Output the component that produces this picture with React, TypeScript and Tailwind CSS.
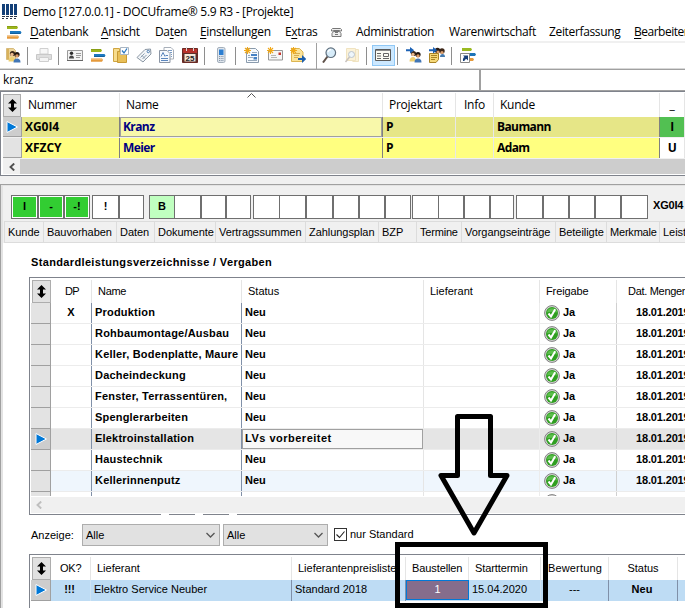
import React from "react";
import clsx from "clsx";

const segoe = "font-['Open_Sans',sans-serif]";
const arial = "font-['Liberation_Sans',Arial,sans-serif]";

type SvgProps = { children: React.ReactNode; className?: string; box?: string };

function Svg({ children, className = "size-4", box = "0 0 16 16" }: SvgProps) {
  return (
    <svg viewBox={box} className={clsx("block shrink-0", className)} fill="none" aria-hidden="true">
      {children}
    </svg>
  );
}

function BarsIcon() {
  return (
    <Svg>
      <path d="M1 2h10l1 1.500L11 5H1z" fill="#9db61c" />
      <path d="M4 7h10.500l1 1.500-1 1.500H4z" fill="#1c78c0" />
      <path d="M1 11.500h11l1 1.500-1 1.700H1z" fill="#e59a3c" />
      <path d="M1 2.500h10" stroke="#7f9412" strokeWidth=".7" />
      <path d="M4 9.500h10.500" stroke="#115a94" strokeWidth=".8" />
      <path d="M1 12.200h11" stroke="#f6c78c" strokeWidth=".9" />
    </Svg>
  );
}

function Star() {
  return (
    <path
      d="M3.500 0v7M0 3.500h7M1 1l5 5M6 1L1 6"
      stroke="#f0a818"
      strokeWidth="1.100"
    />
  );
}

function People() {
  return (
    <>
      <circle cx="7.500" cy="6.500" r="2.600" fill="#3b2718" />
      <circle cx="12" cy="7.500" r="2.600" fill="#21160f" />
      <circle cx="7" cy="7.500" r="1.700" fill="#e9b98d" />
      <circle cx="12" cy="9" r="1.700" fill="#d99a68" />
      <path d="M3.500 14.500c0-3 1.500-4.500 3.500-4.500s3 1.500 3 4.500z" fill="#eed070" />
      <path d="M8.500 15.500c0-3 1.500-4 3.500-4s3.500 1 3.500 4z" fill="#4276b5" />
    </>
  );
}

function UsersIcon() {
  return (
    <Svg>
      <path d="M1.500 1.500h7l2 2v9h-9z" fill="#ecd49a" stroke="#cfae66" strokeWidth=".8" />
      <path d="M2 2h2v10H2z" fill="#d9b25c" />
      <People />
    </Svg>
  );
}

function PrinterIcon() {
  return (
    <Svg>
      <path d="M4 1.500h8V7H4z" fill="#f7f7f7" stroke="#d0d0d0" />
      <path d="M.5 7.500h15v5H.5z" fill="#dedede" stroke="#c8c8c8" />
      <path d="M3.500 10.500h9v4h-9z" fill="#f4f4f4" stroke="#cfcfcf" />
    </Svg>
  );
}

function CardIcon() {
  return (
    <Svg>
      <path d="M.5 3.500h15v10H.5z" fill="#f3f3f3" stroke="#9a9a9a" />
      <path d="M0 13.500h16" stroke="#666" />
      <circle cx="4.500" cy="6.300" r="1.700" fill="#2b2b2b" />
      <path d="M2 11.500c0-2 1-3 2.500-3s2.500 1 2.500 3z" fill="#444" />
      <path d="M9 6.500h5M9 8.500h5M9 10.500h4" stroke="#999" />
    </Svg>
  );
}

function FolderCheckIcon() {
  return (
    <Svg>
      <path d="M.5 1.500h6v13h-6z" fill="#f7dc8c" stroke="#cfa441" />
      <path d="M4.500 4.500h9v11h-9z" fill="#e9bf57" stroke="#c79a35" />
      <path d="M7.500.5h8v7h-8z" fill="#fff" stroke="#a9b6c4" />
      <path d="M9 3.500l2 2.500L14 1.500" stroke="#2a77c0" strokeWidth="1.300" />
    </Svg>
  );
}

function TagIcon() {
  return (
    <Svg>
      <path d="M1 10.500L9 2.500l5.500-.5.5 5-8 8z" fill="#f2f5f8" stroke="#8b97a4" />
      <path d="M4.500 10.500l4-4M6.500 12l4-4M6 8.500l3 3" stroke="#8fa0b2" />
      <circle cx="12.300" cy="4.500" r="1.200" stroke="#4f7eb3" />
    </Svg>
  );
}

function NewspaperIcon() {
  return (
    <Svg>
      <path d="M5 .5h7l2.500 2.500v9H5z" fill="#fff" stroke="#a9b0ba" />
      <path d="M.5 3.500H8l3 3v9H.5z" fill="#f4f8fd" stroke="#8b95a4" />
      <path d="M2 9.500l2-4 2 4M2 11.500h7M6.500 8.500H9M2 13.500h7" stroke="#5b86bd" />
      <path d="M9 3.500h4M11 5.500h2M12 7.500h1M12 9.500h1" stroke="#7a9cc6" />
    </Svg>
  );
}

function CalendarIcon() {
  return (
    <Svg>
      <path d="M.5 1.500h15v14H.5z" fill="#5e2f2a" stroke="#6b2a24" />
      <path d="M1 2h14v4H1z" fill="#b7322b" />
      <path d="M4.500 0v4M11.500 0v4" stroke="#ddd" />
      <path d="M2.500 7h11v7.500h-11z" fill="#f5e9da" />
      <text x="3.600" y="13.700" fontSize="8" fontWeight="bold" fill="#222" fontFamily="Liberation Sans">
        25
      </text>
    </Svg>
  );
}

function PhoneIcon() {
  return (
    <Svg>
      <rect x="4.500" y=".5" width="7.500" height="15" rx="1.500" fill="#dfe5ec" stroke="#a3afbb" />
      <path d="M6 2.500h4.500V8H6z" fill="#2c7ed1" />
      <path d="M6 9.500h4.500M6 11.500h4.500M6 13.500h4.500" stroke="#8595a8" strokeDasharray="1 .7" />
    </Svg>
  );
}

function NewDocIcon() {
  return (
    <Svg>
      <path d="M2.500 1.500h9l3 3v11h-12z" fill="#f6fafe" stroke="#8a9bad" />
      <path d="M8 5.500h5M4 8.500h2M4 10.500h5M4 13.500h9" stroke="#98aabd" />
      <path d="M7 7h6v2H7zM9.500 10h3.500v2.500H9.500z" fill="#4682c4" />
      <Star />
    </Svg>
  );
}

function NewMailIcon() {
  return (
    <Svg>
      <path d="M1.500 3.500h14v9.500h-14z" fill="#f6f6f6" stroke="#979797" />
      <path d="M4 8.500h5M4 10.500h6" stroke="#b5b5b5" />
      <path d="M11.500 5.500h2.500V8h-2.500z" fill="#c7352d" />
      <Star />
    </Svg>
  );
}

function NewExportIcon() {
  return (
    <Svg>
      <path d="M1.500 1.500h8l3.500 3.500v9.500H1.500z" fill="#fbe39a" stroke="#dcb552" />
      <path d="M4 6.500h6M4 8.500h5M4 10.500h4" stroke="#d7ae50" />
      <path d="M8 11h4V8l4.200 4L12 16v-3H8z" fill="#1c5eab" />
      <Star />
    </Svg>
  );
}

function SearchIcon() {
  return (
    <Svg>
      <path d="M6.500 9.500L2 15.500" stroke="#5e5048" strokeWidth="2" />
      <circle cx="9.800" cy="5.700" r="4.800" fill="#d7ecf9" stroke="#5f6f7e" strokeWidth="1.200" />
      <path d="M7 5.200a3 3 0 013-2.500" stroke="#fff" strokeWidth="1.200" />
    </Svg>
  );
}

function SearchFolderIcon() {
  return (
    <Svg>
      <path d="M2.500 1.500h9v12h-9zM11.500 2.500h3v12h-6" fill="#fbf2d9" stroke="#f0e3c0" />
      <path d="M5.500 10l-4 5" stroke="#c9c3be" strokeWidth="1.500" />
      <circle cx="7.500" cy="7.500" r="3" fill="#eef6fb" stroke="#bcc5cd" />
    </Svg>
  );
}

function FormIcon() {
  return (
    <Svg>
      <path d="M.5 2.500h15v11H.5z" fill="#fbfbf4" stroke="#595959" />
      <path d="M1 3.500h14" stroke="#8c8c8c" />
      <path d="M2 6.500h4M2 9h4M2 11.500h4M8 11.500h6" stroke="#666" />
      <path d="M8.500 6.500h5v3h-5z" stroke="#666" />
    </Svg>
  );
}

function ArrowRight() {
  return <path d="M0 2.200h4V0l4.200 3.200L4 6.400V4.200H0z" fill="#1c62b5" />;
}

function AssignPeopleIcon() {
  return (
    <Svg>
      <People />
      <ArrowRight />
    </Svg>
  );
}

function AssignNoteIcon() {
  return (
    <Svg>
      <circle cx="8.500" cy="3.500" r="2.700" fill="#2b1b12" />
      <circle cx="13" cy="4" r="2.700" fill="#3d2617" />
      <circle cx="9" cy="5" r="1.600" fill="#dda170" />
      <circle cx="13" cy="5.500" r="1.600" fill="#dda170" />
      <path d="M11 10c0-2 1-3 2.500-3S16 8 16 10z" fill="#447aae" />
      <path d="M.5 6.500h9v6l-2.500 3H.5z" fill="#f5d878" stroke="#a98324" />
      <path d="M2 8.500h6M2 10.500h6M2 12.500h4" stroke="#a98324" />
      <ArrowRight />
    </Svg>
  );
}

function ShortcutIcon() {
  return (
    <Svg>
      <path d="M2 1h9l1 1.500L11 4H2z" fill="#9aba22" />
      <path d="M6 6h9l1 1.500L15 9H6z" fill="#1d74b8" />
      <path d="M9 11h4l1 1.500-1 1.500H9z" fill="#e59a3c" />
      <path d="M.5 6.500h9v9h-9z" fill="#fff" stroke="#888" />
      <path d="M3 14c-.3-2.200.3-3.300 1.500-4L3 8.500h5v5L6.500 12C5.300 12.300 4.500 13 4.500 14z" fill="#173f79" />
    </Svg>
  );
}

function AppLogo() {
  return (
    <Svg>
      <path d="M0 0h3v11H0zM4 0h3v11H4zM8 0h3v11H8zM12 0h3v11h-3z" fill="#123f78" />
      <path
        d="M0 12h3v1H0zM4 12h3v1H4zM8 12h3v1H8zM12 12h3v1h-3zM0 14h2v1H0zM4 14h2v1H4zM8 14h2v1H8zM12 14h2v1h-2z"
        fill="#28344a"
      />
    </Svg>
  );
}

function TelephoneIcon() {
  return (
    <Svg className="h-[9px] w-[11px]" box="0 0 11 9">
      <path d="M.5 3V1.500l1-1h8l1 1V3h-2v-.5h-6V3zM2.500 3.500h6l1.500 2v3H1v-3z" fill="#eee" stroke="#777" />
      <path d="M4 4.500h3M4 6.500h3" stroke="#777" />
    </Svg>
  );
}

function Check() {
  return (
    <Svg className="size-4">
      <circle cx="8" cy="8" r="7.400" fill="#d8d8d8" stroke="#808080" />
      <circle cx="8" cy="8" r="6" fill="#2f9f20" />
      <path d="M2.800 7.500a5.300 5.300 0 0110.400 0c-3-1-7.400-1-10.400 0z" fill="#5cbf4c" />
      <path d="M4.500 8.500L7 11.500l4.200-7.300" stroke="#fff" strokeWidth="2" />
    </Svg>
  );
}

function Sorter({ className = "w-[19px]" }: { className?: string }) {
  return (
    <div className={clsx("flex h-[23px] shrink-0 items-center justify-center border border-[#adadad] bg-[#e1e1e1]", className)}>
      <Svg className="h-[13px] w-[9px]" box="0 0 9 13">
        <path d="M4.500 0L9 4.500H6v4h3L4.500 13 0 8.500h3v-4H0z" fill="#000" />
      </Svg>
    </div>
  );
}

function Marker({ className, active }: { className: string; active?: boolean }) {
  return (
    <div
      className={clsx(
        "flex shrink-0 items-center justify-center border-r border-b border-[#a0a0a0]",
        active ? "bg-[#cdcdcd]" : "bg-[#e3e3e3]",
        className,
      )}
    >
      {active && (
        <Svg className="h-3 w-3" box="0 0 12 12">
          <path d="M1 .5v11L11.500 6z" fill="#0078d7" stroke="#fff" />
        </Svg>
      )}
    </div>
  );
}

function Chevron({ className }: { className?: string }) {
  return (
    <Svg className={clsx("h-[7px] w-[9px]", className)} box="0 0 9 7">
      <path d="M.5 1l4 4 4-4" stroke="currentColor" strokeWidth="1.300" />
    </Svg>
  );
}

function ScrollLeft() {
  return (
    <Svg className="h-2 w-1.5" box="0 0 6 8">
      <path d="M5.200.5L1.500 4l3.700 3.500" stroke="currentColor" strokeWidth="1.900" />
    </Svg>
  );
}

const menu = [
  { label: "Datenbank", key: 0, width: "w-[71px]" },
  { label: "Ansicht", key: 0, width: "w-[54px]" },
  { label: "Daten", key: 2, width: "w-[45px]" },
  { label: "Einstellungen", key: 0, width: "w-[85px]" },
  { label: "Extras", key: 1, width: "w-[46px]" },
  { label: "", key: -1, width: "w-[25px]" },
  { label: "Administration", key: -1, width: "w-[93px]" },
  { label: "Warenwirtschaft", key: -1, width: "w-[100px]" },
  { label: "Zeiterfassung", key: -1, width: "w-[85px]" },
  { label: "Bearbeiten", key: 0, width: "w-[70px] tracking-[-0.5px]" },
];

function MenuBar() {
  return (
    <nav className="flex h-[18px] shrink-0 items-center pl-1.5 text-[12px] tracking-[-0.35px]">
      <div className="w-6 shrink-0">
        <BarsIcon />
      </div>
      {menu.map(({ label, key, width }, i) => (
        <div key={i} className={clsx("shrink-0 leading-[18px] whitespace-nowrap", width)}>
          {label === "" && <TelephoneIcon />}
          {key < 0 ? (
            label
          ) : (
            <>
              {label.slice(0, key)}
              <span className="underline underline-offset-2">{label[key]}</span>
              {label.slice(key + 1)}
            </>
          )}
        </div>
      ))}
    </nav>
  );
}

function Divider() {
  return <div className="mr-[4.5px] ml-[2.5px] h-[18px] w-px shrink-0 bg-[#8e8e8e]" />;
}

function Tool({ children, active }: { children: React.ReactNode; active?: boolean }) {
  return (
    <div
      className={clsx(
        "flex h-[21px] w-[23px] shrink-0 items-center justify-center pb-px",
        active && "border border-[#90c8f6] bg-[#cce8ff]",
      )}
    >
      {children}
    </div>
  );
}

function Toolbar() {
  return (
    <div className="flex h-[26px] shrink-0 items-center border-b border-[#d8d8d8] pl-[1.5px]">
      <Tool><UsersIcon /></Tool>
      <Divider />
      <Tool><PrinterIcon /></Tool>
      <Divider />
      <Tool><CardIcon /></Tool>
      <Tool><BarsIcon /></Tool>
      <Tool><FolderCheckIcon /></Tool>
      <Tool><TagIcon /></Tool>
      <Tool><NewspaperIcon /></Tool>
      <Tool><CalendarIcon /></Tool>
      <Divider />
      <Tool><PhoneIcon /></Tool>
      <Divider />
      <Tool><NewDocIcon /></Tool>
      <Tool><NewMailIcon /></Tool>
      <Tool><NewExportIcon /></Tool>
      <div className="mr-[0.5px] ml-[6.5px] h-[26px] w-px bg-[#a0a0a0]" />
      <Tool><SearchIcon /></Tool>
      <Tool><SearchFolderIcon /></Tool>
      <Divider />
      <Tool active><FormIcon /></Tool>
      <Divider />
      <Tool><AssignPeopleIcon /></Tool>
      <Tool><AssignNoteIcon /></Tool>
      <Divider />
      <Tool><ShortcutIcon /></Tool>
    </div>
  );
}

const projects = [
  { nr: "XG0I4", name: "Kranz", kunde: "Baumann", flag: "I", active: true },
  { nr: "XFZCY", name: "Meier", kunde: "Adam", flag: "U", active: false },
];

function ProjectGrid() {
  const head = "shrink-0 border-r border-[#e5e5e5]";
  return (
    <section className="h-[85px] shrink-0 border-y border-l border-[#7f838c] bg-white pl-[2px] text-[12px]">
      <div className="flex h-[25px] pt-px leading-[23px] tracking-[-0.25px]">
        <div className="w-[19px] pt-px">
          <Sorter className="w-[18px]" />
        </div>
        <div className={clsx(head, "w-[98px] pl-[6px]")}>Nummer</div>
        <div className={clsx(head, "relative w-[263px] pl-[6px]")}>
          Name
          <Svg className="absolute top-0 left-[127px] h-[5px] w-[9px]" box="0 0 9 5">
            <path d="M.5 4.500l4-4 4 4" stroke="#555" />
          </Svg>
        </div>
        <div className={clsx(head, "w-[73px] pl-[6px]")}>Projektart</div>
        <div className={clsx(head, "w-[38px] pl-[8px]")}>Info</div>
        <div className={clsx(head, "w-[166px] pl-[6px]")}>Kunde</div>
        <div className={clsx(head, "w-[25px] text-center")}>_</div>
      </div>
      {projects.map((p) => (
        <div
          key={p.nr}
          className={clsx(
            "flex h-[21px] border-b border-[#f0f0f0] text-[12px] leading-5 font-bold tracking-[-0.6px]",
            p.active ? "bg-[#e6e687]" : "bg-[#ffff80]",
          )}
        >
          <Marker className="h-5 w-[19px]" active={p.active} />
          <div className="w-[98px] shrink-0 border-r border-[#808080] pl-[3px] tracking-[-0.05px]">{p.nr}</div>
          <div
            className={clsx(
              "w-[262px] shrink-0 text-[#000080]",
              p.active ? "border border-[#a0a0a0] bg-[#f8f8aa] pl-[2px] leading-[18px]" : "pl-[3px]",
            )}
          >
            {p.name}
          </div>
          <div className="w-[74px] shrink-0 border-r border-l border-[#e8e8e8] border-l-[#808080] pl-[3px]">P</div>
          <div className="w-[38px] shrink-0 border-r border-[#e8e8e8]" />
          <div className="w-[166px] shrink-0 border-r border-[#808080] pl-[3px]">{p.kunde}</div>
          <div className={clsx("w-[25px] shrink-0 border-r border-[#e5e5e5] text-center", p.active ? "bg-[#52c052]" : "bg-white")}>
            {p.flag}
          </div>
        </div>
      ))}
      <div className="flex h-[15px]">
        <div className="flex w-[17px] items-center justify-center bg-[#f0f0f0] text-[#505050]">
          <ScrollLeft />
        </div>
        <div className="flex-1 bg-[#cdcdcd]" />
      </div>
    </section>
  );
}

const flagGroups = [
  { gap: "ml-0", cells: [["I", "w-[27px]"], ["-", "w-[26px]"], ["-!", "w-[26px]"]] },
  { gap: "ml-[2px]", cells: [["!", "w-[27px]"], ["", "w-[25px]"]] },
  {
    gap: "ml-[5px]",
    cells: [["B", "w-[26px]"], ["", "w-[26px]"], ["", "w-[25px]"], ["", "w-[25px]"]],
  },
  {
    gap: "ml-[2px]",
    cells: [["", "w-[27px]"], ["", "w-[26px]"], ["", "w-[27px]"], ["", "w-[26px]"], ["", "w-[26px]"], ["", "w-[26px]"]],
  },
  {
    gap: "ml-px",
    cells: [["", "w-[27px]"], ["", "w-[25px]"], ["", "w-[26px]"], ["", "w-[24px]"]],
  },
  {
    gap: "ml-[2px]",
    cells: [["", "w-[27px]"], ["", "w-[26px]"], ["", "w-[26px]"], ["", "w-[26px]"], ["", "w-[27px]"]],
  },
];

function FlagBar() {
  return (
    <div className="flex h-6 pl-2 text-[11px] leading-[21px] font-bold">
      {flagGroups.map((group, g) => (
        <div key={g} className={clsx("flex shrink-0", group.gap)}>
          {group.cells.map(([label, width], i) => (
            <div
              key={i}
              className={clsx(
                "h-6 border border-[#6f6f6f] text-center",
                width,
                g === 0 && "bg-[#32cd32] ring-1 ring-white ring-inset",
                label === "B" && "bg-[#c0ffc0]",
                g !== 0 && label !== "B" && "bg-white",
                g > 1 && g < 5 && i === 1 && "border-l-0",
              )}
            >
              {label}
            </div>
          ))}
        </div>
      ))}
      <span className="pl-[5px] tracking-[-0.2px]">XG0I4</span>
    </div>
  );
}

const tabs = [
  ["Kunde", "w-[39px]"],
  ["Bauvorhaben", "w-[73px]"],
  ["Daten", "w-[38px]"],
  ["Dokumente", "w-[61px]"],
  ["Vertragssummen", "w-[90px]"],
  ["Zahlungsplan", "w-[73px]"],
  ["BZP", "w-[38px]"],
  ["Termine", "w-[45px]"],
  ["Vorgangseinträge", "w-[94px]"],
  ["Beteiligte", "w-[51px]"],
  ["Merkmale", "w-[53px]"],
  ["Leistungen", "w-[66px]"],
];

function Tabs() {
  return (
    <div className="mt-[2px] flex h-[22px] pl-px text-[11px] tracking-[-0.05px]">
      {tabs.map(([label, width]) => (
        <div
          key={label}
          className={clsx(
            "shrink-0 border-t border-b border-l border-[#dcdcdc] pl-[3px] leading-[21px] whitespace-nowrap",
            width,
            (label === "Merkmale" || label === "Termine") && "tracking-[-0.2px]",
          )}
        >
          {label}
        </div>
      ))}
    </div>
  );
}

const positions = [
  "Produktion",
  "Rohbaumontage/Ausbau",
  "Keller, Bodenplatte, Maure",
  "Dacheindeckung",
  "Fenster, Terrassentüren,",
  "Spenglerarbeiten",
  "Elektroinstallation",
  "Haustechnik",
  "Kellerinnenputz",
];

function PositionGrid() {
  const head = "shrink-0 border-r border-[#e5e5e5]";
  return (
    <section className="ml-[26px] flex h-[238px] flex-col border-t border-b border-l border-[#7f838c] pl-px text-[11px]">
      <div className="flex h-[25px] pt-[2px] leading-[23px]">
        <div className="w-5 pl-px">
          <Sorter />
        </div>
        <div className={clsx(head, "w-[41px] pl-[14px] tracking-[-0.6px]")}>DP</div>
        <div className={clsx(head, "w-[150px] pl-[6px] tracking-[-0.3px]")}>Name</div>
        <div className={clsx(head, "w-[182px] pl-[6px]")}>Status</div>
        <div className={clsx(head, "w-[116px] pl-[6px]")}>Lieferant</div>
        <div className={clsx(head, "w-[77px] pl-[6px] tracking-[-0.1px]")}>Freigabe</div>
        <div className="w-[80px] shrink-0 pl-[11px] tracking-[-0.3px] whitespace-nowrap">Dat. Mengen</div>
      </div>
      <div className="h-[193px] overflow-hidden font-bold">
        {[...positions, ""].map((name, i) => {
          const active = name === "Elektroinstallation";
          return (
            <div
              key={i}
              className={clsx(
                "flex h-[21px] leading-[19px] whitespace-nowrap",
                active && "bg-[#e5e5e5]",
                name === "Kellerinnenputz" && "bg-[#eff6fd]",
              )}
            >
              <Marker className="w-5" active={active} />
              <div className="flex border-b border-[#ececec]">
                <div className="w-[41px] shrink-0 border-r border-[#8090a8] text-center">{i === 0 && "X"}</div>
                <div className="w-[150px] shrink-0 border-r border-[#8090a8] pl-[3px] tracking-[0.2px]">{name}</div>
                {active ? (
                  <div className="h-5 w-[181px] shrink-0 border border-[#a0a0a0] bg-[#f8f8f8] pl-[2px] leading-[17px] tracking-[0.5px]">
                    LVs vorbereitet
                  </div>
                ) : (
                  <div className="w-[181px] shrink-0 pl-[3px]">{name && "Neu"}</div>
                )}
                <div className="w-px shrink-0 bg-[#e5e5e5]" />
                <div className="w-[116px] shrink-0 border-r border-[#ececec]" />
                <div className="flex w-[77px] shrink-0 gap-[3px] border-r border-[#d0d0d0] pt-[2px] pl-1">
                  <Check />
                  <span className="leading-[15px]">{name && "Ja"}</span>
                </div>
                <div className="w-[80px] shrink-0 pl-[19px] tracking-[-0.15px]">{name && "18.01.2019"}</div>
              </div>
            </div>
          );
        })}
      </div>
      <div className="mt-px mb-px flex flex-1 items-center bg-[#f0f0f0] pl-[5px] text-[#bfbfbf]">
        <ScrollLeft />
      </div>
    </section>
  );
}

function Select({ value, className }: { value: string; className: string }) {
  return (
    <div className={clsx("flex h-[22px] items-center justify-between border border-[#adadad] bg-[#e1e1e1] pr-1 pl-[3px]", className)}>
      {value}
      <Chevron className="text-[#555]" />
    </div>
  );
}

function FilterBar() {
  return (
    <div className="mt-[9px] flex h-[22px] items-center pl-[28px] text-[11px]">
      <span className="w-[51px]">Anzeige:</span>
      <Select value="Alle" className="w-[138px]" />
      <Select value="Alle" className="ml-[3px] w-[105px]" />
      <div className="mb-px ml-1.5 flex size-[13px] items-center justify-center border border-[#333] bg-white">
        <Svg className="size-[11px]" box="0 0 11 11">
          <path d="M1.500 5.500l3 3 5-6" stroke="#222" strokeWidth="1.100" />
        </Svg>
      </div>
      <span className="pb-px pl-[3px]">nur Standard</span>
    </div>
  );
}

function SupplierGrid() {
  const head = "shrink-0 border-r border-[#e5e5e5] whitespace-nowrap";
  const cell = "shrink-0 border-r border-[#8090a8] whitespace-nowrap";
  return (
    <section className="mt-2 ml-[26px] h-[70px] border-t border-l border-[#7f838c] pl-px text-[11px]">
      <div className="flex h-[25px] pt-[2px] leading-[23px]">
        <div className="w-5 pl-px">
          <Sorter />
        </div>
        <div className={clsx(head, "w-10 pl-[9px] tracking-[-0.2px]")}>OK?</div>
        <div className={clsx(head, "w-[201px] pl-[6px]")}>Lieferant</div>
        <div className={clsx(head, "w-[114px] pl-[6px]")}>Lieferantenpreisliste</div>
        <div className={clsx(head, "w-[63px] pl-[6px] tracking-[-0.1px]")}>Baustellen</div>
        <div className={clsx(head, "w-[72px] pl-[6px] tracking-[-0.1px]")}>Starttermin</div>
        <div className={clsx(head, "w-[68px] pl-[7px] tracking-[0.15px]")}>Bewertung</div>
        <div className={clsx(head, "w-[69px] text-center")}>Status</div>
      </div>
      <div className="flex h-[21px] bg-[#bedcf4] leading-[19px]">
        <Marker className="w-5" active />
        <div className="w-10 shrink-0 border-r border-[#d0e4f4] pr-[2px] text-center font-bold tracking-[-0.2px]">!!!</div>
        <div className={clsx(cell, "w-[201px] pl-[3px]")}>Elektro Service Neuber</div>
        <div className={clsx(cell, "w-[114px] pl-[3px]")}>Standard 2018</div>
        <div className="h-5 w-[63px] shrink-0 border border-[#0078d7] bg-[#856d8c] text-center leading-[17px] text-white">1</div>
        <div className="w-[72px] shrink-0 border-r border-[#d0e4f4] pl-[3px]">15.04.2020</div>
        <div className={clsx(cell, "w-[68px] text-center")}>---</div>
        <div className={clsx(cell, "w-[69px] pr-[2px] text-center font-bold")}>Neu</div>
      </div>
    </section>
  );
}

// Hand-drawn marking around the two columns in the supplier list
function Annotation() {
  return (
    <>
      <div className="absolute top-[542px] left-[395px] h-[66px] w-[153px] border-[5px] border-black" />
      <Svg className="absolute top-[412px] left-[436px] h-[128px] w-[76px]" box="0 0 76 128">
        <path
          d="M21.500 4.500h33v59h16.500L38 121 5 63.500h16.500z"
          stroke="#000"
          strokeWidth="5"
          strokeLinejoin="round"
        />
      </Svg>
    </>
  );
}

export default function App() {
  return (
    <div className={clsx("relative flex h-[608px] w-[685px] flex-col overflow-hidden bg-white text-black", segoe)}>
      <header className="flex h-[23px] shrink-0 items-center gap-[5px] pl-[2px] text-[12px]">
        <AppLogo />
        <h1 className="tracking-[-0.3px] whitespace-nowrap">Demo [127.0.0.1] - DOCUframe® 5.9 R3 - [Projekte]</h1>
      </header>
      <MenuBar />
      <div className="h-[2px] shrink-0 bg-[#f0f0f0]" />
      <Toolbar />
      <div className="flex h-[22px] shrink-0 border-t border-b border-[#a0a0a0] text-[12px] leading-[19px]">
        <div className="w-[481px] border-r-2 border-[#a0a0a0] pl-[3px] tracking-[-0.15px]">kranz</div>
      </div>
      <ProjectGrid />
      <div className="h-2 shrink-0 bg-[#f0f0f0]" />
      <main className={clsx("flex-1 border-t border-l border-[#a0a0a0] bg-[#f0f0f0]", arial)}>
        <div className="border-t border-l-2 border-[#e3e3e3] pt-[9px]">
          <FlagBar />
          <Tabs />
          <div className="relative bg-white pt-[11px]">
            <h2 className="mb-[7px] pl-[28px] text-[11px] leading-4 font-bold tracking-[0.35px]">
              Standardleistungsverzeichnisse / Vergaben
            </h2>
            <PositionGrid />
            <div className="absolute top-[271px] left-[158px] flex gap-[26px]">
              <div className="h-px w-2 bg-white" />
              <div className="h-px w-2 bg-white" />
              <div className="h-px w-2 bg-white" />
            </div>
            <FilterBar />
            <SupplierGrid />
          </div>
        </div>
      </main>
      <Annotation />
    </div>
  );
}
